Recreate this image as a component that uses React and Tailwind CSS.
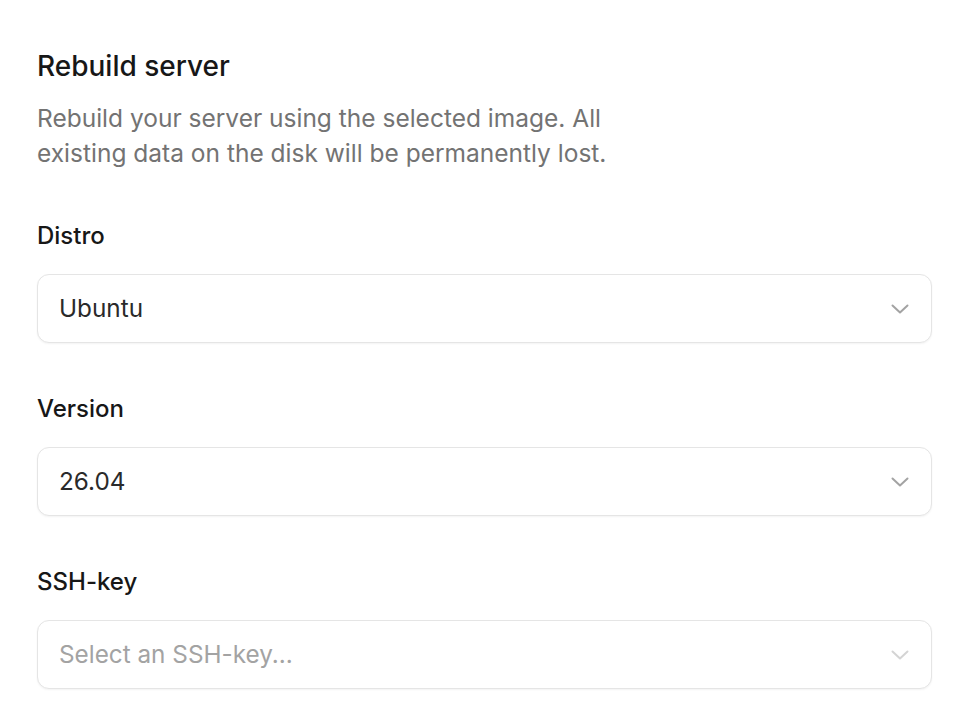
import React from "react";

function Chevron({ className }) {
  return (
    <svg viewBox="0 0 18 10" width="18" height="10" fill="none" stroke="currentColor" strokeWidth="2" strokeLinecap="round" strokeLinejoin="round" className={className}>
      <path d="M1.5 1.5 9 8.5l7.5-7" />
    </svg>
  );
}

function Field({ label, value, placeholder }) {
  return (
    <div className="flex flex-col">
      <label className="text-[24px] leading-[32px] font-medium text-[#171717]">{label}</label>
      <button className="mt-[22px] flex h-[69px] w-full items-center justify-between rounded-[12px] border border-[#e5e5e5] bg-white pl-[21px] pr-[22px] shadow-[0_1px_2px_rgba(0,0,0,0.05)]">
        <span className={"text-[24.3px] " + (value ? "text-[#2a2a2a]" : "text-[#a3a3a3]")}>{value || placeholder}</span>
        <Chevron className={value ? "text-[#a3a3a3]" : "text-[#d4d4d4]"} />
      </button>
    </div>
  );
}

export default function App() {
  return (
    <div className="min-h-screen bg-white" style={{ fontFamily: "Inter, 'Noto Sans', sans-serif" }}>
      <div className="pl-[37px] pt-[49px] pr-[32px]">
        <h2 className="text-[28px] leading-[34px] font-medium text-[#171717]">Rebuild server</h2>
        <p className="mt-[18px] max-w-[620px] text-[24.5px] leading-[35px] text-[#737373]">
          Rebuild your server using the selected image. All existing data on the disk will be permanently lost.
        </p>
        <div className="mt-[49px] flex flex-col gap-[50px]">
          <Field label="Distro" value="Ubuntu" />
          <Field label="Version" value="26.04" />
          <Field label="SSH-key" placeholder="Select an SSH-key..." />
        </div>
      </div>
    </div>
  );
}
